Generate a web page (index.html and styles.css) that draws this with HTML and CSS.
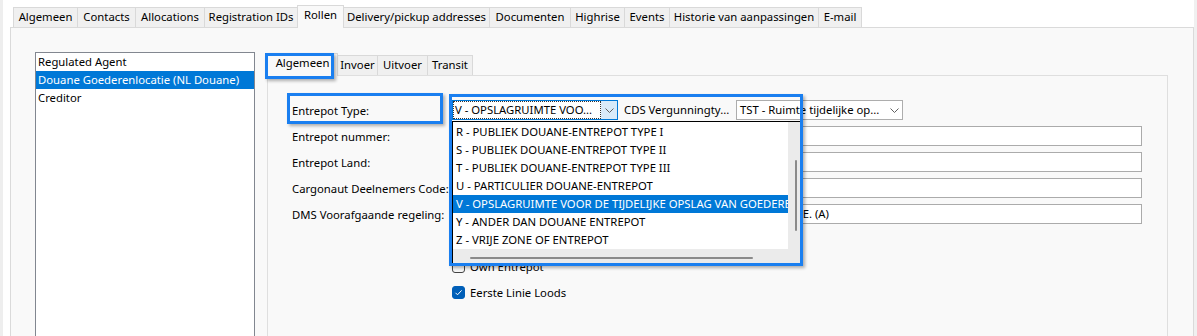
FILE: index.html
```html
<!DOCTYPE html>
<html lang="nl">

<head>
  <meta charset="UTF-8" />
  <title>Relatie - Rollen</title>
  <link rel="stylesheet" href="styles.css">
</head>

<body>
  <!-- hoofdtabs -->
  <div class="tabstrip">
    <div class="tab w-alg">Algemeen</div>
    <div class="tab w-con">Contacts</div>
    <div class="tab w-all">Allocations</div>
    <div class="tab w-reg">Registration IDs</div>
    <div class="tab w-rol active">Rollen</div>
    <div class="tab w-del">Delivery/pickup addresses</div>
    <div class="tab w-doc">Documenten</div>
    <div class="tab w-hig">Highrise</div>
    <div class="tab w-evt">Events</div>
    <div class="tab w-his">Historie van aanpassingen</div>
    <div class="tab w-mail">E-mail</div>
  </div>

  <div class="panel">
    <!-- rollen lijst -->
    <div class="rolelist">
      <div class="role">Regulated Agent</div>
      <div class="role sel">Douane Goederenlocatie (NL Douane)</div>
      <div class="role">Creditor</div>
    </div>

    <div class="roledetail">
      <div class="subtabs">
        <div class="subtab s-alg active">Algemeen</div>
        <div class="subtab s-inv">Invoer</div>
        <div class="subtab s-uit">Uitvoer</div>
        <div class="subtab s-tra">Transit</div>
      </div>

      <div class="subpanel">
        <div class="form">
          <div class="label">Entrepot Type:</div>
          <div class="combos">
            <div class="combo focus">
              <div class="val"><span>V - OPSLAGRUIMTE VOO...</span></div>
              <div class="btn">
                <svg width="9" height="5" viewBox="0 0 9 5"><path d="M0.5 0.5L4.5 4.5L8.5 0.5" fill="none" stroke="#606060" /></svg>
              </div>
            </div>
            <div class="combo plain">
              <div class="val">CDS Vergunningty...</div>
            </div>
            <div class="combo wide">
              <div class="val">TST - Ruimte tijdelijke op...</div>
              <div class="btn">
                <svg width="9" height="5" viewBox="0 0 9 5"><path d="M0.5 0.5L4.5 4.5L8.5 0.5" fill="none" stroke="#606060" /></svg>
              </div>
            </div>

            <!-- opengeklapte lijst -->
            <div class="dropdown">
              <div class="dd-list">
                <div class="dd-item">R - PUBLIEK DOUANE-ENTREPOT TYPE I</div>
                <div class="dd-item">S - PUBLIEK DOUANE-ENTREPOT TYPE II</div>
                <div class="dd-item">T - PUBLIEK DOUANE-ENTREPOT TYPE III</div>
                <div class="dd-item">U - PARTICULIER DOUANE-ENTREPOT</div>
                <div class="dd-item sel">V - OPSLAGRUIMTE VOOR DE TIJDELIJKE OPSLAG VAN GOEDEREN</div>
                <div class="dd-item">Y - ANDER DAN DOUANE ENTREPOT</div>
                <div class="dd-item">Z - VRIJE ZONE OF ENTREPOT</div>
              </div>
              <div class="vtrack"><div class="vthumb"></div></div>
              <div class="htrack"><div class="hthumb"></div></div>
            </div>
          </div>

          <div class="label">Entrepot nummer:</div>
          <div class="field"></div>

          <div class="label">Entrepot Land:</div>
          <div class="field"></div>

          <div class="label">Cargonaut Deelnemers Code:</div>
          <div class="field"></div>

          <div class="label">DMS Voorafgaande regeling:</div>
          <div class="field">IM - INVOER / TIJDELIJKE OPSLAG IN VRIJE ZONES / DOUANE ENZ. E. (A)</div>

          <div class="label"></div>
          <div></div>

          <div class="label"></div>
          <div class="check">
            <div class="box"></div>
            <span>Own Entrepot</span>
          </div>

          <div class="label"></div>
          <div class="check">
            <div class="box on">
              <svg width="11" height="11" viewBox="0 0 11 11"><path d="M2.5 5.8L4.5 7.8L8.6 3.4" fill="none" stroke="#fff" stroke-width="1" /></svg>
            </div>
            <span>Eerste Linie Loods</span>
          </div>
        </div>
      </div>
    </div>
  </div>

  <!-- markeringen -->
  <div class="mark mark-tab"></div>
  <div class="mark mark-label"></div>
  <div class="mark mark-list"></div>
</body>

</html>
```

FILE: styles.css
```css
* {
  box-sizing: border-box;
}

body {
  margin: 0;
  height: 336px;
  overflow: hidden;
  background-color: #fff;
  border-left: 3px solid #eeeeee;
  border-right: 3px solid #f0f0f0;
  font-family: "Noto Sans", sans-serif;
  font-size: 11.3px;
  color: #000;
}

/* hoofdtabs */
.tabstrip {
  display: flex;
  align-items: flex-end;
  height: 27px;
  padding: 5px 0 0 10px;
}

.tab,
.subtab {
  height: 20px;
  line-height: 18px;
  margin-right: -1px;
  border: 1px solid #d9d9d9;
  border-bottom: none;
  background-color: #f0f0f0;
  text-align: center;
  white-space: nowrap;
}

.tab.active,
.subtab.active {
  position: relative;
  z-index: 1;
  height: 23px;
  margin-bottom: -1px;
  background-color: #f9f9f9;
}

.w-alg { width: 65px; }
.w-con { width: 59px; }
.w-all { width: 70px; }
.w-reg { width: 94px; }
.w-rol { width: 47px; }
.w-del { width: 147px; }
.w-doc { width: 82px; }
.w-hig { width: 55px; }
.w-evt { width: 46px; }
.w-his { width: 150px; }
.w-mail { width: 44px; }

.panel {
  display: flex;
  gap: 12px;
  height: 330px;
  margin-left: 7px;
  padding: 24px 25px 0 24px;
  background-color: #f9f9f9;
  border: 1px solid #dadada;
}

.rolelist {
  flex: none;
  width: 220px;
  height: 300px;
  background-color: #fff;
  border: 1px solid #828790;
}

.role {
  height: 18px;
  line-height: 18px;
  padding-left: 2px;
  white-space: nowrap;
}

.role.sel {
  background-color: #0078d7;
  color: #fff;
}

.roledetail {
  flex: 1;
  display: flex;
  flex-direction: column;
}

.subtabs {
  display: flex;
  align-items: flex-end;
  height: 23px;
}

.s-alg { width: 71px; }
.s-inv { width: 41px; }
.s-uit { width: 51px; }
.s-tra { width: 46px; }

.subpanel {
  flex: 1;
  padding: 24px 25px 0 24px;
  background-color: #f9f9f9;
  border: 1px solid #dfdfdf;
}

.form {
  display: grid;
  grid-template-columns: 160px 690px;
  grid-auto-rows: 20px;
  row-gap: 6px;
  align-items: center;
}

.label {
  white-space: nowrap;
}

/* comboboxen */
.combos {
  position: relative;
  display: flex;
  height: 20px;
}

.combo {
  display: flex;
  height: 20px;
  background-color: #fff;
  border: 1px solid #adadad;
}

.combo .val {
  flex: 1;
  line-height: 18px;
  padding-left: 2px;
  white-space: nowrap;
  overflow: hidden;
}

.combo .btn {
  display: flex;
  align-items: center;
  justify-content: center;
  width: 16px;
}

.combo.focus {
  width: 166px;
  border-color: #0078d7;
}

.combo.focus .val {
  padding-left: 0;
  outline: 1px dotted #333;
  outline-offset: -1px;
}

.combo.focus .val span {
  padding-left: 2px;
}

.combo.focus .btn {
  background-color: #d8eaf9;
}

.combo.plain {
  width: 118px;
  background-color: transparent;
  border-color: transparent;
}

.combo.plain .val {
  padding-left: 5px;
}

.combo.wide {
  width: 167px;
}

.combo.wide .val {
  padding-left: 3px;
}

.dropdown {
  position: absolute;
  left: 0;
  top: 21px;
  z-index: 5;
  display: grid;
  grid-template-columns: 335px 12px;
  grid-template-rows: 127px 14px;
  width: 349px;
  height: 143px;
  background-color: #ebebeb;
  border: 1px solid #000;
}

.dd-list {
  padding-top: 1px;
  background-color: #fff;
}

.dd-item {
  height: 18px;
  line-height: 18px;
  padding-left: 3px;
  white-space: nowrap;
  overflow: hidden;
}

.dd-item.sel {
  background-color: #0078d7;
  color: #fff;
}

.vtrack {
  padding: 38px 0 0 7px;
}

.vthumb {
  width: 2px;
  height: 71px;
  background-color: #8a8a8a;
  border-radius: 1px;
}

.htrack {
  padding: 8px 0 0 17px;
}

.hthumb {
  width: 283px;
  height: 2px;
  background-color: #8a8a8a;
  border-radius: 1px;
}

/* invoervelden */
.field {
  height: 20px;
  line-height: 18px;
  padding-left: 3px;
  background-color: #fff;
  border: 1px solid #ababab;
  white-space: nowrap;
  overflow: hidden;
}

.check {
  display: flex;
  align-items: center;
  gap: 5px;
}

.box {
  display: flex;
  align-items: center;
  justify-content: center;
  width: 13px;
  height: 13px;
  background-color: #f6f6f6;
  border: 1px solid #444;
  border-radius: 3px;
}

.box.on {
  background-color: #005fb8;
  border-color: #005fb8;
}

/* blauwe markeringen */
.mark {
  position: absolute;
  z-index: 10;
  border: 3px solid #1a7ff0;
  box-shadow: 2px 2px 3px rgba(0, 0, 0, 0.3);
}

.mark-tab {
  left: 265px;
  top: 53px;
  width: 69px;
  height: 26px;
}

.mark-label {
  left: 287px;
  top: 93px;
  width: 156px;
  height: 31px;
}

.mark-list {
  left: 449px;
  top: 94px;
  width: 354px;
  height: 172px;
}
```
